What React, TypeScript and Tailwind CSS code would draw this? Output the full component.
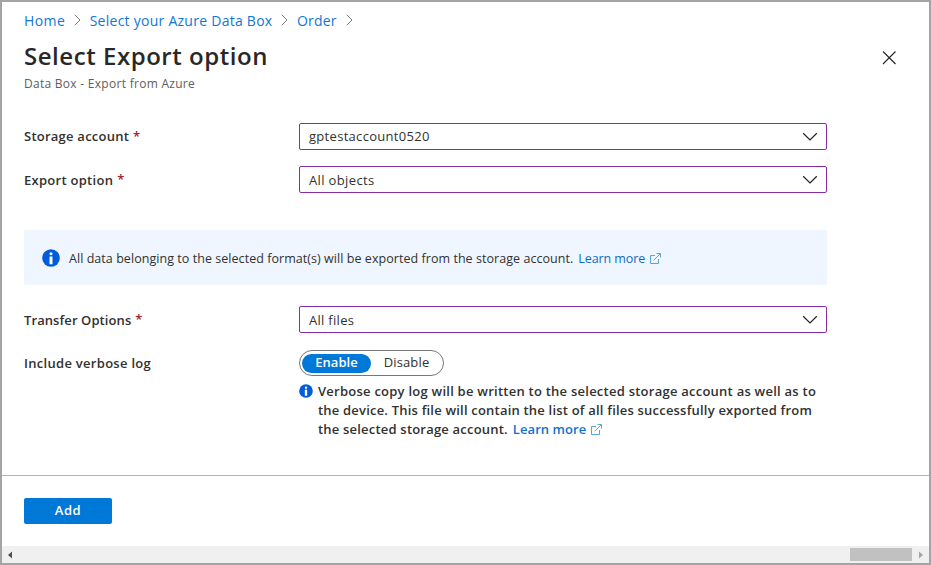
import type { ReactNode } from "react";

function Crumb({ children, className }: { children: ReactNode; className: string }) {
  return (
    <div className="flex items-center">
      <a className={`whitespace-nowrap text-[14px] text-[#0f78d4] ${className}`}>{children}</a>
      <svg className="ml-[9px] mr-[8.5px] block" width="7" height="12" viewBox="0 0 7 12" fill="none" stroke="#777" strokeWidth="1">
        <path d="M0.7 0.7 6 6 0.7 11.3" />
      </svg>
    </div>
  );
}

function Chevron() {
  return (
    <svg className="block" width="16" height="10" viewBox="0 0 16 10" fill="none" stroke="#222" strokeWidth="1.2">
      <path d="M1.2 1.3 8 8 14.8 1.3" />
    </svg>
  );
}

function Info({ size }: { size: number }) {
  return (
    <svg className="block shrink-0" width={size} height={size} viewBox="0 0 18 18">
      <circle cx="9" cy="9" r="8.8" fill="#015cda" />
      <circle cx="9" cy="4.7" r="1.5" fill="#fff" />
      <rect x="7.5" y="7.4" width="3" height="7.8" rx="0.3" fill="#fff" />
    </svg>
  );
}

function External() {
  return (
    <svg className="ml-[5px] inline-block align-[-1px]" width="11" height="11" viewBox="0 0 11 11" fill="none" stroke="#59a9cf" strokeWidth="1">
      <path d="M5 2.5H0.5V10.5H8.5V6M3.7 7.3 10.2 0.8M6.5 0.5H10.5V4.5" />
    </svg>
  );
}

function Label({ children, className, required }: { children: ReactNode; className: string; required?: boolean }) {
  return (
    <div className="flex w-[275px] shrink-0 whitespace-nowrap text-[13px] font-semibold leading-[26px] text-[#323130]">
      <span className={className}>{children}</span>
      {required && <span className="ml-[4px] text-[#a4262c]">*</span>}
    </div>
  );
}

function Select({ children, className }: { children: ReactNode; className: string }) {
  return (
    <div className="flex h-[27px] w-[528px] items-center justify-between rounded-[2px] border border-[#8a2da5] pl-[9px] pr-[8px]">
      <span className={`text-[13px] text-[#323130] ${className}`}>{children}</span>
      <Chevron />
    </div>
  );
}

export default function App() {
  return (
    <div className="flex h-[565px] w-[931px] flex-col overflow-hidden border-2 border-[#a4a4a4] bg-white font-['Open_Sans','Noto_Sans',sans-serif]">
      <header className="flex h-[121px] shrink-0 justify-between pl-[22px] pr-[33px]">
        <div>
          <nav className="mt-[8px] flex h-[20px] items-center">
            <Crumb className="tracking-[0.4px]">Home</Crumb>
            <Crumb className="tracking-[0.26px]">Select your Azure Data Box</Crumb>
            <Crumb className="tracking-[0.2px]">Order</Crumb>
          </nav>
          <h1 className="mt-[10px] whitespace-nowrap text-[24px] font-semibold leading-[32px] text-[#292827]">
            <span className="tracking-[0.54px]">Select Export option</span>
          </h1>
          <p className="mt-[4px] whitespace-nowrap text-[12px] leading-[16px] text-[#605e5c]">
            <span className="tracking-[0.28px]">Data Box - Export from Azure</span>
          </p>
        </div>
        <svg className="mt-[49px] block" width="14" height="14" viewBox="0 0 14 14" fill="none" stroke="#222" strokeWidth="1.1">
          <path d="M1 0.5 13.5 13M13.5 0.5 1 13" />
        </svg>
      </header>

      <main className="flex h-[352px] shrink-0 flex-col pl-[22px]">
        <div className="flex h-[27px]">
          <Label className="tracking-[0.24px]" required>Storage account</Label>
          <Select className="tracking-[0.3px]">gptestaccount0520</Select>
        </div>
        <div className="mt-[16px] flex h-[27px]">
          <Label className="pt-px tracking-[0.28px]" required>Export option</Label>
          <Select className="pt-[2px] tracking-[0.36px]">All objects</Select>
        </div>
        <div className="mt-[37px] flex h-[55px] w-[803px] items-center rounded-[2px] bg-[#eff6ff] pl-[18px]">
          <Info size={18} />
          <p className="ml-[9px] whitespace-nowrap pt-[3px] text-[12.5px] text-[#323130]">
            <span className="tracking-[0.05px]">All data belonging to the selected format(s) will be exported from the storage account.</span>
            <a className="ml-[5px] tracking-[-0.1px] text-[#0f6cbd]">Learn more</a>
            <External />
          </p>
        </div>
        <div className="mt-[21px] flex h-[27px]">
          <Label className="pt-px tracking-[0.09px]" required>Transfer Options</Label>
          <Select className="pt-[2px] tracking-[0.3px]">All files</Select>
        </div>
        <div className="mt-[17px] flex h-[27px]">
          <Label className="tracking-[0.29px]">Include verbose log</Label>
          <div className="flex h-[26px] w-[145px] items-center rounded-full border border-[#777] pl-[2px] text-[13px]">
            <span className="flex h-[19px] w-[69px] items-center justify-center rounded-full bg-[#0078d7] font-semibold text-white">Enable</span>
            <span className="flex w-[71px] justify-center tracking-[0.15px] text-[#323130]">Disable</span>
          </div>
        </div>
        <div className="ml-[275px] mt-[5px] flex">
          <div className="mt-[2px]">
            <Info size={14} />
          </div>
          <p className="ml-[5px] whitespace-nowrap text-[13px] font-semibold leading-[19px] text-[#323130]">
            <span className="tracking-[0.245px]">Verbose copy log will be written to the selected storage account as well as to</span>
            <br />
            <span className="tracking-[0.2px]">the device. This file will contain the list of all files successfully exported from</span>
            <br />
            <span className="tracking-[0.2px]">the selected storage account.</span>
            <a className="ml-[5px] tracking-[0.08px] text-[#0f72d0]">Learn more</a>
            <External />
          </p>
        </div>
      </main>

      <footer className="h-[71px] shrink-0 border-t border-[#b5b5b5] pl-[22px] pt-[22px]">
        <button className="block h-[26px] w-[88px] rounded-[2px] bg-[#0078d7] pb-[2px] text-[13px] font-semibold leading-[24px] tracking-[0.6px] text-white">Add</button>
      </footer>

      <div className="flex h-[17px] shrink-0 items-center bg-[#f0f0f0] pl-[6px] pr-[6px]">
        <svg className="block" width="4" height="8" viewBox="0 0 4 8" fill="#505050">
          <path d="M4 0.5V7.5L0 4Z" />
        </svg>
        <div className="ml-auto mr-[7px] h-[13px] w-[62px] bg-[#c1c1c1]" />
        <svg className="block" width="4" height="8" viewBox="0 0 4 8" fill="#a3a3a3">
          <path d="M0 0.5V7.5L4 4Z" />
        </svg>
      </div>
    </div>
  );
}
